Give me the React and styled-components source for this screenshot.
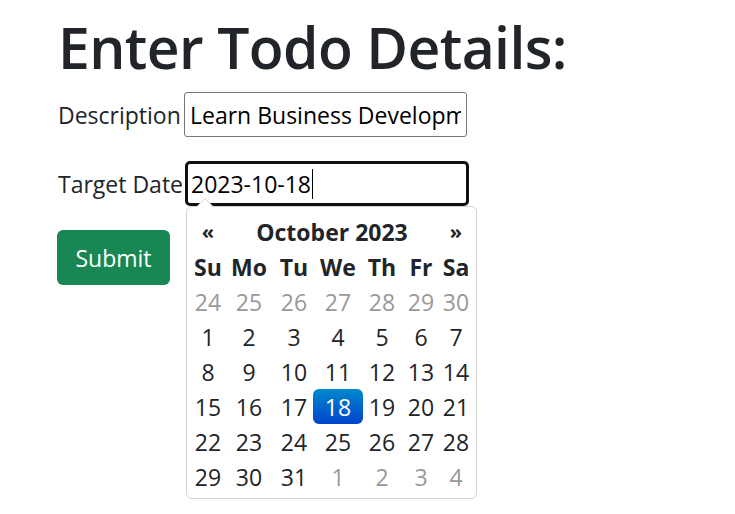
import React from "react";
import styled, { createGlobalStyle, css } from "styled-components";

const GlobalStyle = createGlobalStyle`
  html, body { margin: 0; padding: 0; background: #fff; }
  body {
    font-family: "Open Sans", "Noto Sans", sans-serif;
    color: #212529;
  }
`;

const Page = styled.div`
  box-sizing: border-box;
  min-height: 514px;
  padding: 11px 0 0 57px;
`;

const Heading = styled.h1`
  margin: 0 0 9px 1px;
  font-size: 57px;
  font-weight: 600;
  line-height: 72px;
  letter-spacing: -0.6px;
  color: #212529;
`;

const Form = styled.form`
  display: flex;
  flex-direction: column;
  align-items: flex-start;
  gap: 24px;
`;

const Row = styled.div`
  display: grid;
  grid-template-columns: 127px 283px;
  align-items: center;
  font-size: 23px;
`;

const Label = styled.label`
  padding-left: 1px;
  color: #212529;
  white-space: nowrap;
`;

const fieldBase = css`
  box-sizing: border-box;
  height: 45px;
  width: 283px;
  font-family: inherit;
  font-size: 23px;
  color: #000;
  background: #fff;
  padding: 0 5px;
`;

const TextInput = styled.input`
  ${fieldBase}
  border: 1px solid #767676;
  border-radius: 3px;
  outline: none;
`;

const DateWrap = styled.div`
  position: relative;
`;

const DateField = styled.div`
  ${fieldBase}
  width: 284px;
  margin-left: 1px;
  border: 3px solid #101010;
  border-radius: 5px;
  padding: 0 3px;
  display: flex;
  align-items: center;
`;

const Caret = styled.span`
  display: inline-block;
  width: 1px;
  height: 30px;
  background: #000;
  margin-left: 1px;
`;

const SubmitButton = styled.button`
  box-sizing: border-box;
  width: 113px;
  height: 55px;
  border: none;
  border-radius: 6px;
  background: #198754;
  color: #fff;
  font-family: inherit;
  font-size: 23px;
  padding: 0;
  cursor: pointer;
`;

const Dropdown = styled.div`
  position: absolute;
  top: 100%;
  left: 2px;
  box-sizing: border-box;
  width: 291px;
  height: 293px;
  padding: 7px 5px 5px 6px;
  background: #fff;
  border: 1px solid #d4d4d4;
  border-radius: 6px;
  z-index: 10;

  &::before {
    content: "";
    position: absolute;
    top: -9px;
    left: 9px;
    border-left: 9px solid transparent;
    border-right: 9px solid transparent;
    border-bottom: 9px solid #d4d4d4;
  }
  &::after {
    content: "";
    position: absolute;
    top: -8px;
    left: 10px;
    border-left: 8px solid transparent;
    border-right: 8px solid transparent;
    border-bottom: 8px solid #fff;
  }
`;

const CalGrid = styled.div`
  display: grid;
  grid-template-columns: 30px 52px 38px 50px 38px 40px 30px;
  grid-auto-rows: 35px;
  font-size: 23px;
`;

const Cell = styled.div`
  display: flex;
  align-items: center;
  justify-content: center;
  white-space: nowrap;
  border-radius: 6px;
  color: ${(p) => (p.$muted ? "#999" : "#212529")};
  font-weight: ${(p) => (p.$bold ? 700 : 400)};
  ${(p) =>
    p.$active &&
    css`
      background: linear-gradient(to bottom, #0088cc, #0044cc);
      color: #fff;
    `}
`;

const Title = styled(Cell)`
  grid-column: span 5;
  font-weight: 700;
`;

const Nav = styled(Cell)`
  font-weight: 700;
  font-size: 20px;
`;

const dayNames = ["Su", "Mo", "Tu", "We", "Th", "Fr", "Sa"];

const weeks = [
  [24, 25, 26, 27, 28, 29, 30].map((d) => ({ d, muted: true })),
  [1, 2, 3, 4, 5, 6, 7].map((d) => ({ d })),
  [8, 9, 10, 11, 12, 13, 14].map((d) => ({ d })),
  [15, 16, 17, 18, 19, 20, 21].map((d) => ({ d, active: d === 18 })),
  [22, 23, 24, 25, 26, 27, 28].map((d) => ({ d })),
  [
    { d: 29 },
    { d: 30 },
    { d: 31 },
    { d: 1, muted: true },
    { d: 2, muted: true },
    { d: 3, muted: true },
    { d: 4, muted: true },
  ],
];

export default function App() {
  return (
    <>
      <GlobalStyle />
      <Page>
        <Heading>Enter Todo Details:</Heading>
        <Form onSubmit={(e) => e.preventDefault()}>
          <Row>
            <Label>Description</Label>
            <TextInput readOnly value="Learn Business Development" />
          </Row>
          <Row>
            <Label>Target Date</Label>
            <DateWrap>
              <DateField>
                2023-10-18
                <Caret />
              </DateField>
              <Dropdown>
                <CalGrid>
                  <Nav>«</Nav>
                  <Title>October 2023</Title>
                  <Nav>»</Nav>
                  {dayNames.map((n) => (
                    <Cell key={n} $bold>
                      {n}
                    </Cell>
                  ))}
                  {weeks.flat().map((c, i) => (
                    <Cell key={i} $muted={c.muted} $active={c.active}>
                      {c.d}
                    </Cell>
                  ))}
                </CalGrid>
              </Dropdown>
            </DateWrap>
          </Row>
          <SubmitButton type="submit">Submit</SubmitButton>
        </Form>
      </Page>
    </>
  );
}
